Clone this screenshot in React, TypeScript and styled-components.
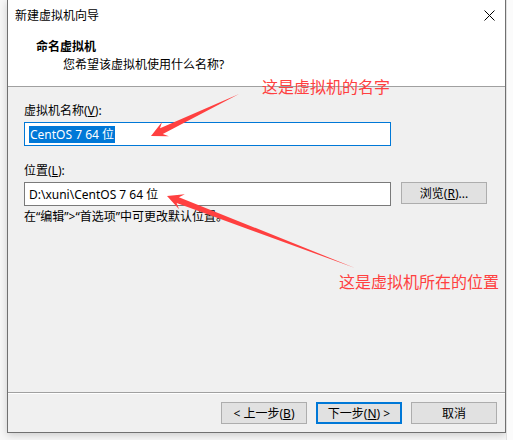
import styled, { createGlobalStyle } from 'styled-components'

const Global = createGlobalStyle`
  html, body {
    margin: 0;
    padding: 0;
    background: #f7f7f7;
  }
  body {
    font-family: "Noto Sans", "Noto Sans CJK SC", sans-serif;
    font-size: 12px;
    color: #000;
  }
`

const Page = styled.div`
  position: relative;
  width: 513px;
  height: 440px;
  overflow: hidden;
  display: flex;
  align-items: flex-start;
`

const Window = styled.div`
  margin-left: 7px;
  width: 497px;
  height: 432px;
  border: 1px solid #707070;
  border-top: none;
  background: #f0f0f0;
  display: flex;
  flex-direction: column;
  box-shadow: 0 2px 8px rgba(0, 0, 0, 0.18);
`

const Desktop = styled.div`
  flex: 1;
  height: 100%;
  background: #fbfbfb;
  border-left: 1px solid #e0e0e0;
`

const TitleBar = styled.div`
  height: 30px;
  background: #fff;
  display: flex;
  align-items: center;
  justify-content: space-between;
  padding: 0 10px 0 7px;
`

const Header = styled.div`
  height: 57px;
  background: #fff;
  border-bottom: 1px solid #a0a0a0;
  display: flex;
  flex-direction: column;
  padding-top: 8px;
  box-sizing: border-box;
`

const Heading = styled.div`
  font-weight: bold;
  padding-left: 28px;
  line-height: 17px;
`

const SubText = styled.div`
  padding-left: 55px;
  line-height: 17px;
  margin-top: 1px;
`

const Body = styled.div`
  flex: 1;
  padding: 16px 0 0 16px;
  display: flex;
  flex-direction: column;
`

const Label = styled.div<{ $top?: number }>`
  line-height: 16px;
  margin-top: ${p => p.$top ?? 0}px;
`

const Key = styled.span`
  text-decoration: underline;
`

const Row = styled.div`
  display: flex;
  align-items: flex-start;
  gap: 10px;
  margin-top: 3px;
`

const TextBox = styled.div<{ $focus?: boolean }>`
  width: 367px;
  height: 24px;
  box-sizing: border-box;
  background: #fff;
  border: 1px solid ${p => (p.$focus ? '#0078d7' : '#7a7a7a')};
  display: flex;
  align-items: center;
  padding-left: 4px;
  white-space: pre;
`

const Selected = styled.span`
  background: #0078d7;
  color: #fff;
  line-height: 17px;
  padding: 0 1px;
`

const Button = styled.div<{ $primary?: boolean }>`
  width: 86px;
  height: 22px;
  box-sizing: border-box;
  background: #e1e1e1;
  border: ${p => (p.$primary ? '2px solid #0078d7' : '1px solid #adadad')};
  display: flex;
  align-items: center;
  justify-content: center;
  white-space: pre;
`

const Note = styled.div`
  line-height: 16px;
  margin-top: 3px;
`

const Footer = styled.div`
  height: 40px;
  border-top: 1px solid #a0a0a0;
  box-shadow: inset 0 1px 0 #fff;
  display: flex;
  justify-content: flex-end;
  align-items: flex-start;
  gap: 9px;
  padding: 9px 8px 0 0;
  box-sizing: border-box;
`

const Overlay = styled.svg`
  position: absolute;
  left: 0;
  top: 0;
  pointer-events: none;
`

const Callout = styled.div<{ $x: number; $y: number }>`
  position: absolute;
  left: ${p => p.$x}px;
  top: ${p => p.$y}px;
  color: #ff4040;
  font-family: "Noto Sans CJK SC", sans-serif;
  font-size: 16px;
  line-height: 18px;
  white-space: nowrap;
`

type Pt = [number, number]

function arrow(tail: Pt, tip: Pt) {
  const dx = tip[0] - tail[0]
  const dy = tip[1] - tail[1]
  const len = Math.hypot(dx, dy)
  const ux = dx / len
  const uy = dy / len
  const nx = -uy
  const ny = ux
  const head = 16
  const half = 8
  const neck = head * 0.72
  const shaft = 3.2
  const at = (back: number, side: number): string =>
    `${tip[0] - ux * back + nx * side},${tip[1] - uy * back + ny * side}`
  return [
    `${tail[0]},${tail[1]}`,
    at(neck, shaft),
    at(head, half),
    `${tip[0]},${tip[1]}`,
    at(head, -half),
    at(neck, -shaft),
  ].join(' ')
}

function CloseIcon() {
  return (
    <svg width="11" height="11" viewBox="0 0 11 11">
      <path d="M0.5 0.5 L10.5 10.5 M10.5 0.5 L0.5 10.5" stroke="#000" strokeWidth="1" />
    </svg>
  )
}

export default function App() {
  return (
    <>
      <Global />
      <Page>
        <Window>
          <TitleBar>
            <span>新建虚拟机向导</span>
            <CloseIcon />
          </TitleBar>
          <Header>
            <Heading>命名虚拟机</Heading>
            <SubText>您希望该虚拟机使用什么名称?</SubText>
          </Header>
          <Body>
            <Label>
              虚拟机名称(<Key>V</Key>):
            </Label>
            <Row>
              <TextBox $focus>
                <Selected>CentOS 7 64 位</Selected>
              </TextBox>
            </Row>
            <Label $top={17}>
              位置(<Key>L</Key>):
            </Label>
            <Row>
              <TextBox>D:\xuni\CentOS 7 64 位</TextBox>
              <Button>
                浏览(<Key>R</Key>)...
              </Button>
            </Row>
            <Note>{'在“编辑”>“首选项”中可更改默认位置。'}</Note>
          </Body>
          <Footer>
            <Button>
              {'< 上一步('}
              <Key>B</Key>)
            </Button>
            <Button $primary>
              下一步(<Key>N</Key>
              {') >'}
            </Button>
            <Button>取消</Button>
          </Footer>
        </Window>
        <Desktop />
        <Overlay width="513" height="440">
          <polygon points={arrow([239, 94], [151, 136])} fill="#ff4040" />
          <polygon points={arrow([355, 268], [167, 196])} fill="#ff4040" />
        </Overlay>
        <Callout $x={262} $y={77}>这是虚拟机的名字</Callout>
        <Callout $x={339} $y={272}>这是虚拟机所在的位置</Callout>
      </Page>
    </>
  )
}
